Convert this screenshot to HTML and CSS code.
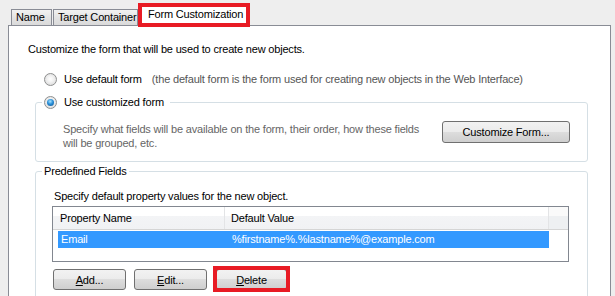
FILE: index.html
```html
<!DOCTYPE html>
<html>
<head>
<meta charset="utf-8">
<link rel="stylesheet" href="styles.css">
</head>
<body>
<div class="window">
  <div class="tabs">
    <div class="tab">Name</div>
    <div class="tab">Target Container</div>
    <div class="tab active">Form Customization</div>
  </div>
  <div class="panel">
    <p class="intro">Customize the form that will be used to create new objects.</p>
    <div class="radio-row">
      <span class="radio"></span>
      <span class="radio-label">Use default form</span>
      <span class="hint">(the default form is the form used for creating new objects in the Web Interface)</span>
    </div>
    <fieldset class="group g1">
      <legend><span class="radio checked"></span><span class="radio-label">Use customized form</span></legend>
      <div class="g1-body">
        <p class="desc">Specify what fields will be available on the form, their order, how these fields<br>will be grouped, etc.</p>
        <button class="btn btn-custom">Customize Form...</button>
      </div>
    </fieldset>
    <fieldset class="group g2">
      <legend>Predefined Fields</legend>
      <div class="g2-body">
        <p class="spec">Specify default property values for the new object.</p>
        <div class="list">
          <div class="list-head">
            <span class="h-col1">Property Name</span>
            <span class="h-col2">Default Value</span>
            <span class="h-col3"></span>
          </div>
          <div class="list-row">
            <span class="r-col1">Email</span>
            <span class="r-col2">%firstname%.%lastname%@example.com</span>
          </div>
        </div>
        <div class="actions">
          <button class="btn btn-act"><u>A</u>dd...</button>
          <button class="btn btn-act"><u>E</u>dit...</button>
          <span class="mark-wrap"><button class="btn btn-act"><u>D</u>elete</button><span class="mark"></span></span>
        </div>
      </div>
    </fieldset>
  </div>
</div>
</body>
</html>
```

FILE: styles.css
```css
* { box-sizing: border-box; }
html, body { margin: 0; padding: 0; }
body {
  background: #eeeeee;
  font-family: "Liberation Sans", Arial, sans-serif;
  font-size: 11px;
  letter-spacing: -0.18px;
  color: #000;
  width: 615px;
  height: 296px;
  overflow: hidden;
}
p { margin: 0; }

.tabs {
  display: flex;
  align-items: flex-end;
  height: 25px;
  padding-left: 11px;
}
.tab {
  height: 16px;
  line-height: 15px;
  border: 1px solid #898c95;
  border-bottom: none;
  background: linear-gradient(#f2f2f2, #e4e4e4 50%, #dadada);
  padding: 0 4px;
  margin-right: 1px;
  white-space: nowrap;
  overflow: hidden;
}
.tab:nth-child(1) { width: 41px; }
.tab:nth-child(2) { width: 85px; }
.tab.active {
  position: relative;
  z-index: 2;
  height: 24px;
  margin-bottom: -2px;
  margin-left: -1px;
  width: 112px;
  background: #fff;
  border: 4px solid #e81b24;
  line-height: 15px;
  padding: 0 0 0 6px;
  margin-right: 0;
}

.panel {
  margin-left: 8px;
  width: 603px;
  height: 271px;
  overflow: hidden;
  background: #fff;
  border: 1px solid #898c95;
  border-bottom: none;
  padding-top: 17px;
}
.intro {
  margin-left: 19px;
  line-height: 13px;
}
.radio-row {
  display: flex;
  align-items: center;
  margin: 17px 0 0 35px;
  height: 13px;
}
.radio {
  display: inline-block;
  position: relative;
  width: 13px;
  height: 13px;
  flex: none;
  border-radius: 50%;
  border: 1px solid #8e8f8f;
  background: radial-gradient(circle at 50% 45%, #ffffff 0, #f3f3f3 35%, #d2d2d2 100%);
}
.radio.checked::after {
  content: "";
  position: absolute;
  left: 2px;
  top: 2px;
  width: 7px;
  height: 7px;
  border-radius: 50%;
  background: radial-gradient(circle at 45% 35%, #a6e3ff 0, #2a8fd8 45%, #0b4f8c 100%);
}
.radio-label { margin-left: 7px; line-height: 13px; }
.hint { margin-left: 10px; color: #555; line-height: 13px; }

.group {
  margin: 0 0 0 26px;
  width: 553px;
  padding: 0;
  border: 1px solid #d5dfe5;
  border-radius: 3px;
  min-width: 0;
}
.group legend {
  margin-left: 6px;
  padding: 0 2px;
  line-height: 13px;
  height: 13px;
  display: flex;
  align-items: center;
}
.g1 { margin-top: 10px; }
.g1 legend .radio-label { margin-right: 4px; }
.g1-body {
  display: flex;
  justify-content: space-between;
  align-items: flex-start;
  padding: 12px 17px 11px 27px;
}
.desc {
  margin-top: 1px;
  line-height: 14px;
  color: #666;
}
.btn {
  font-family: "Liberation Sans", Arial, sans-serif;
  font-size: 11px;
  letter-spacing: -0.18px;
  color: #000;
  border: 1px solid #707070;
  border-radius: 3px;
  background: linear-gradient(#f2f2f2, #ebebeb 50%, #dddddd 50%, #cfcfcf);
  padding: 0;
  margin: 0;
  line-height: 18px;
}
.btn-custom { width: 128px; height: 22px; flex: none; }

.g2 { margin-top: 3px; height: 140px; }
.g2-body { padding: 12px 0 0 16px; }
.spec { margin-left: 2px; line-height: 13px; }
.list {
  margin-top: 3px;
  width: 517px;
  height: 56px;
  border: 1px solid #828790;
}
.list-head {
  display: flex;
  height: 23px;
  line-height: 22px;
  background: linear-gradient(#ffffff 0, #ffffff 40%, #f3f4f6 40%, #f1f2f4 100%);
  border-bottom: 1px solid #d5d5d5;
}
.h-col1 { width: 172px; padding-left: 7px; border-right: 1px solid #e3e4e6; }
.h-col2 { width: 324px; padding-left: 6px; border-right: 1px solid #e3e4e6; }
.h-col3 { flex: 1; background: linear-gradient(#fafafa 40%, #eef0f2 40%); }
.list-row {
  display: flex;
  margin: 1px 0 0 5px;
  width: 491px;
  height: 17px;
  line-height: 17px;
  background: #3399ff;
  color: #fff;
}
.r-col1 { width: 167px; padding-left: 3px; }
.r-col2 { padding-left: 7px; }

.actions {
  display: flex;
  gap: 8px;
  margin: 7px 0 0 1px;
}
.btn-act { width: 73px; height: 21px; }
.mark-wrap { position: relative; display: block; margin-left: 1px; }
.mark {
  position: absolute;
  left: -3px;
  top: -3px;
  width: 77px;
  height: 26px;
  border: 4px solid #e81b24;
}
.mark-wrap .btn-act { width: 71px; }
```
